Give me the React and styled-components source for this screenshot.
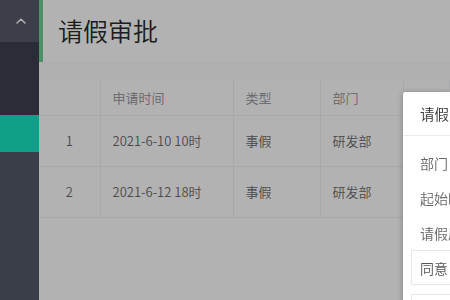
import styled, { createGlobalStyle } from "styled-components";

const GlobalStyle = createGlobalStyle`
  html, body {
    margin: 0;
    padding: 0;
    height: 100%;
    overflow: hidden;
  }
  body {
    font-family: "Noto Sans CJK SC", "Noto Sans", sans-serif;
  }
`;

const rows = [
  { id: 1, time: "2021-6-10 10时", type: "事假", dept: "研发部" },
  { id: 2, time: "2021-6-12 18时", type: "事假", dept: "研发部" },
];

function App() {
  return (
    <>
      <GlobalStyle />
      <Layout>
        <Sidebar>
          <SideTop>
            <Chevron viewBox="0 0 10 6">
              <path d="M1 5 L5 1.3 L9 5" />
            </Chevron>
          </SideTop>
          <SideBand />
          <SideItem active />
          <SideRest />
        </Sidebar>
        <Main>
          <TitleBar>
            <h1>请假审批</h1>
          </TitleBar>
          <Gap />
          <Table>
            <thead>
              <tr>
                <HeadCell center width={61} />
                <HeadCell width={133}>申请时间</HeadCell>
                <HeadCell width={87}>类型</HeadCell>
                <HeadCell width={83}>部门</HeadCell>
                <HeadCell>请假原因</HeadCell>
              </tr>
            </thead>
            <tbody>
              {rows.map((r) => (
                <tr key={r.id}>
                  <Cell center>{r.id}</Cell>
                  <Cell>{r.time}</Cell>
                  <Cell>{r.type}</Cell>
                  <Cell>{r.dept}</Cell>
                  <Cell>家中有事</Cell>
                </tr>
              ))}
            </tbody>
          </Table>
        </Main>
      </Layout>
      <Mask />
      <Dialog>
        <DialogTitle>请假审批详情</DialogTitle>
        <DialogBody>
          <FormLabel>部门：研发部</FormLabel>
          <FormLabel>起始时间：2021-6-10 10时</FormLabel>
          <FormLabel>请假原因：家中有事</FormLabel>
          <Field>同意</Field>
          <Field />
        </DialogBody>
      </Dialog>
    </>
  );
}

export default App;

const Layout = styled.div`
  display: flex;
  height: 100vh;
  background: #fff;
`;

const Sidebar = styled.aside`
  width: 39px;
  flex-shrink: 0;
  display: flex;
  flex-direction: column;
  background: #545969;
`;

const SideTop = styled.div`
  height: 42px;
  display: flex;
  justify-content: center;
  align-items: center;
  padding-left: 2px;
  background: #56596a;
`;

const Chevron = styled.svg`
  width: 10px;
  height: 6px;
  fill: none;
  stroke: #fff;
  stroke-width: 1.5;
  stroke-linecap: round;
  stroke-linejoin: round;
`;

const SideBand = styled.div`
  height: 73px;
  background: #3d404f;
`;

const SideItem = styled.div`
  height: 37px;
  background: ${(p) => (p.active ? "#17e4c3" : "transparent")};
`;

const SideRest = styled.div`
  flex: 1;
  background: #545969;
`;

const Main = styled.main`
  flex: 1;
  display: flex;
  flex-direction: column;
  min-width: 0;
`;

const TitleBar = styled.div`
  height: 62px;
  box-sizing: border-box;
  border-left: 4px solid #72d090;
  padding-left: 15px;
  display: flex;
  align-items: center;
  background: #fff;

  h1 {
    margin: 0 0 2px;
    font-size: 25px;
    font-weight: 350;
    color: #2a2a2a;
  }
`;

const Gap = styled.div`
  height: 18px;
  background: #fbfbfb;
`;

const Table = styled.table`
  border-collapse: collapse;
  width: 100%;
  table-layout: fixed;
  font-size: 13px;
  font-weight: 350;
`;

const HeadCell = styled.th`
  width: ${(p) => (p.width ? `${p.width}px` : "auto")};
  height: 35px;
  box-sizing: border-box;
  padding: 0 12px;
  text-align: ${(p) => (p.center ? "center" : "left")};
  font-weight: 350;
  color: #909399;
  border-right: 1px solid #f0f1f4;
  border-bottom: 1px solid #f0f1f4;
  white-space: nowrap;
  overflow: hidden;
`;

const Cell = styled.td`
  height: 51px;
  box-sizing: border-box;
  padding: 0 12px;
  text-align: ${(p) => (p.center ? "center" : "left")};
  color: #6a6c71;
  border-right: 1px solid #f0f1f4;
  border-bottom: 1px solid #f0f1f4;
  white-space: nowrap;
  overflow: hidden;
`;

const Mask = styled.div`
  position: fixed;
  inset: 0;
  background: rgba(0, 0, 0, 0.3);
`;

const Dialog = styled.div`
  position: fixed;
  left: 403px;
  top: 92px;
  right: 0;
  overflow: hidden;
  background: #fff;
  border-radius: 2px 0 0 2px;
  box-shadow: 0 1px 6px rgba(0, 0, 0, 0.3);
`;

const DialogTitle = styled.div`
  height: 44px;
  box-sizing: border-box;
  padding: 0 17px;
  display: flex;
  align-items: center;
  font-size: 14.5px;
  font-weight: 350;
  color: #333;
  border-bottom: 1px solid #ececec;
  white-space: nowrap;
`;

const DialogBody = styled.div`
  padding: 9px 0 0 8px;
  display: flex;
  flex-direction: column;
`;

const FormLabel = styled.div`
  height: 35px;
  padding-left: 9px;
  display: flex;
  align-items: center;
  font-size: 14px;
  font-weight: 350;
  color: #666;
  white-space: nowrap;
`;

const Field = styled.div`
  height: 35px;
  box-sizing: border-box;
  margin-bottom: 9px;
  padding-left: 8px;
  display: flex;
  align-items: center;
  font-size: 14px;
  font-weight: 350;
  color: #555;
  border: 1px solid #e6e6e6;
  border-right: none;
  border-radius: 2px 0 0 2px;
`;
